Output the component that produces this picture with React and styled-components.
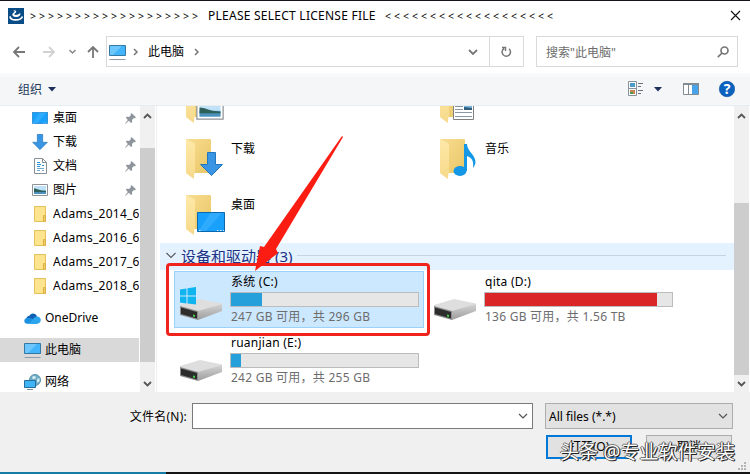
import React from "react";
import styled, { createGlobalStyle } from "styled-components";

const GlobalStyle = createGlobalStyle`
    * {
        box-sizing: border-box;
    }

    body {
        margin: 0;
        overflow: hidden;
        font-family: "Noto Sans", "Noto Sans CJK SC", sans-serif;
        font-size: 12px;
        color: #000;
    }

    svg {
        display: block;
        flex: none;
    }
`;

const Screen = styled.div`
    position: relative;
    display: flex;
    flex-direction: column;
    width: 750px;
    height: 474px;
    overflow: hidden;
    background: #fff;
    border-top: 1px solid #17131a;
`;

const TitleBar = styled.header`
    display: flex;
    align-items: center;
    gap: 6px;
    height: 29px;
    padding: 0 9px 0 8px;
`;

const Title = styled.h1`
    display: flex;
    flex: 1;
    align-items: center;
    margin: 0;
    font-size: 12px;
    font-weight: 400;
    white-space: pre;
`;

const Chevrons = styled.span`
    width: 171px;
    font-size: 10.5px;
    letter-spacing: 2.99px;
`;

const Caption = styled.span`
    width: 184px;
    padding-left: 7px;
    letter-spacing: 0.25px;
`;

const NavBar = styled.nav`
    display: flex;
    align-items: center;
    height: 43px;
    padding-left: 12px;
`;

const NavIcons = styled.div`
    display: flex;
    align-items: center;
    width: 94px;
`;

const PathBox = styled.div`
    display: flex;
    align-items: center;
    width: 418px;
    height: 31px;
    margin-right: 12px;
    padding-left: 2px;
    border: 1px solid #d9d9d9;
`;

const SearchBox = styled.div`
    display: flex;
    align-items: center;
    width: 202px;
    height: 31px;
    padding-right: 8px;
    border: 1px solid #d9d9d9;
`;

const Crumb = styled.span`
    display: flex;
    flex: 1;
    align-items: center;
    padding-left: 7px;
`;

const PathText = styled.span`
    width: 36px;
    margin: 0 10px 2px 9px;
    white-space: nowrap;
`;

const Refresh = styled.div`
    display: flex;
    align-items: center;
    justify-content: center;
    width: 34px;
    height: 29px;
    margin-left: 11px;
    border-left: 1px solid #d9d9d9;
`;

const SearchText = styled.span`
    flex: 1;
    padding-left: 9px;
    color: #6d6d6d;
    white-space: nowrap;
`;

const ToolBar = styled.div`
    display: flex;
    align-items: center;
    height: 33px;
    padding: 0 15px 0 18px;
    color: #1e395b;
    background: linear-gradient(#f9fbfc, #f4f6f8 5px);
    border-bottom: 1px solid #e8ecee;
`;

const Organize = styled.span`
    flex: 1;
    display: flex;
    align-items: center;
    gap: 6px;
`;

const Body = styled.div`
    display: flex;
    height: 286px;
`;

const Sidebar = styled.aside`
    width: 139px;
    margin-right: 1px;
    overflow: hidden;
`;

const SideRow = styled.div`
    display: flex;
    align-items: center;
    height: 24px;
    margin-top: ${(p) => (p.$root ? 8 : 0)}px;
    padding-left: ${(p) => (p.$root ? 24 : 32)}px;
    background: ${(p) => (p.$active ? "#d9d9d9" : "none")};
    white-space: nowrap;
`;

const SideIcon = styled.span`
    display: flex;
    flex: none;
    justify-content: center;
    width: 16px;
    margin-right: 5px;
`;

const SideLabel = styled.span`
    flex: 1;
    padding-bottom: 2px;
    letter-spacing: ${(p) => (p.$latin ? 0.25 : 0)}px;
`;

const Pin = styled.span`
    margin-right: 3px;
`;

const ScrollTrack = styled.div`
    display: flex;
    flex-direction: column;
    align-items: center;
    justify-content: space-between;
    width: 15px;
    padding: 7px 0 5px;
    background: linear-gradient(
        #f0f0f0 ${(p) => p.$from}px,
        #cdcdcd ${(p) => p.$from}px,
        #cdcdcd ${(p) => p.$to}px,
        #f0f0f0 ${(p) => p.$to}px
    );
`;

const Main = styled.main`
    width: 578px;
    margin-left: 1px;
    padding-left: 3px;
    border-left: 1px solid #eef1f3;
    overflow: hidden;
`;

const Folders = styled.div`
    display: grid;
    grid-template-columns: 254px 254px;
    grid-auto-rows: 56px;
    height: 164px;
    margin-top: -28px;
    padding-left: 26px;
`;

const FolderTile = styled.div`
    display: flex;
    padding-top: 5px;
`;

const FolderName = styled.span`
    margin: 1px 0 0 4px;
    line-height: 18px;
`;

const GroupHeader = styled.div`
    display: flex;
    align-items: center;
    gap: 5px;
    height: 27px;
    margin-top: 1px;
    padding: 0 8px 3px 6px;
    color: #1e3287;
    background: #e3f2fe;
    font-size: 15px;
    white-space: nowrap;

    &::after {
        content: "";
        flex: 1;
        height: 1px;
        background: #c4d4e0;
    }
`;

const Drives = styled.div`
    display: grid;
    grid-template-columns: 250px 250px;
    grid-auto-rows: 57px;
    gap: 4px;
    padding: 1px 0 0 14px;
`;

const DriveTile = styled.div`
    display: flex;
    padding-left: 5px;
    background: ${(p) => (p.$selected ? "#cce8ff" : "none")};
    border: 1px solid ${(p) => (p.$selected ? "#99d1ff" : "transparent")};
`;

const DriveInfo = styled.div`
    width: 189px;
    margin-left: 6px;
    letter-spacing: 0.25px;
    white-space: nowrap;
`;

const DriveName = styled.div`
    height: 20px;
    padding-left: 1px;
    line-height: 19px;
`;

const Gauge = styled.div`
    height: 15px;
    background: #e6e6e6;
    border: 1px solid #bcbcbc;
`;

const GaugeFill = styled.div`
    height: 13px;
    background: ${(p) => (p.$full ? "#da2626" : "#26a0da")};
`;

const DriveSpace = styled.div`
    padding: 1px 0 0 1px;
    color: #6d6d6d;
    line-height: 18px;
`;

const Footer = styled.footer`
    display: flex;
    flex-direction: column;
    gap: 6px;
    height: 80px;
    padding: 11px 17px 0 0;
    background: #f0f0f0;
`;

const FooterRow = styled.div`
    display: flex;
    align-items: center;
    justify-content: flex-end;
    gap: ${(p) => p.$gap}px;
`;

const FileLabel = styled.label`
    margin-right: -7px;
    letter-spacing: 0.25px;
    white-space: nowrap;
`;

const Combo = styled.div`
    display: flex;
    align-items: center;
    justify-content: space-between;
    width: ${(p) => p.$width}px;
    height: 26px;
    padding: 0 4px 0 3px;
    background: ${(p) => (p.$editable ? "#fff" : "#e2e2e2")};
    border: 1px solid ${(p) => (p.$editable ? "#7a7a7a" : "#adadad")};
`;

const Button = styled.button`
    width: 86px;
    height: 24px;
    padding: 0;
    margin-right: ${(p) => (p.$primary ? 0 : 1)}px;
    background: #e1e1e1;
    border: ${(p) => (p.$primary ? "2px solid #0078d7" : "1px solid #adadad")};
    font: inherit;
    line-height: 18px;
`;

const Desktop = styled.div`
    height: 2px;
    background: linear-gradient(90deg, #157ca6 166px, #141414 166px);
`;

const Highlight = styled.div`
    position: absolute;
    left: 166px;
    top: 262px;
    width: 264px;
    height: 73px;
    border: 3px solid #f0241c;
    border-radius: 4px;
`;

const Arrow = styled.svg`
    position: absolute;
    left: 250px;
    top: 133px;
`;

const Watermark = styled.div`
    position: absolute;
    left: 560px;
    top: 438px;
    color: #fff;
    font-size: 19px;
    line-height: 26px;
    letter-spacing: 0.1px;
    white-space: nowrap;
    text-shadow: 1px 1px 0 #222, -1px 0 0 #555, 0 -1px 0 #777, 1px 0 0 #333;
`;

const Grip = styled.svg`
    position: absolute;
    left: 738px;
    top: 461px;
`;

const Chevron = ({ d = "M1 1l4 4 4-4", w = 10, h = 6, color = "#555", stroke = 1.8 }) => (
    <svg width={w} height={h} fill="none" stroke={color} strokeWidth={stroke}>
        <path d={d} />
    </svg>
);

const CrumbArrow = () => <Chevron d="M1 1l3 3-3 3" w={6} h={8} color="#777" stroke={1.5} />;

const AppLogo = () => (
    <svg width="16" height="16" viewBox="0 0 16 16">
        <path fill="#0a4c86" d="M0 0h16v16H0z" />
        <path fill="#fff" d="M5 2.5c2-1 4 .2 3 1.8-.7 1-2 1.4-1.6 2.2.6 1 4.6.2 5.6-1.5 1.3 2-1 4-4 4C5 9 3.8 7.5 4.5 6 5 4.8 6.6 4.3 6.6 3.5 6.6 2.8 5.8 2.6 5 2.5z" />
        <path fill="none" stroke="#fff" strokeWidth="1.7" d="M2 8.3c.5 4.8 10.5 4.8 12.5.2" />
    </svg>
);

const Monitor = () => (
    <svg width="17" height="16" viewBox="0 0 17 16">
        <path fill="#41b4fb" stroke="#3479a4" d="M.5 1.5h16v10H.5z" />
        <path fill="#8bd2fd" opacity=".6" d="M1 2h12L4 11H1z" />
        <path stroke="#8e9caa" d="M.5 15.5h16" />
    </svg>
);

const DesktopIcon = ({ w = 16, h = 12 }) => (
    <svg width={w} height={h} viewBox="0 0 28 20" preserveAspectRatio="none">
        <path fill="#18a0fb" stroke="#0b68ae" d="M.5.5h27v19H.5z" />
        <path fill="#46b6ff" opacity=".5" d="M13 1h12L9 19H2z" />
        <path stroke="#d6efff" strokeDasharray="1.5 1.5" d="M2 18.5h2M20 18.5h7" />
    </svg>
);

const DownArrow = ({ w = 16, h = 16 }) => (
    <svg width={w} height={h} viewBox="0 0 24 24">
        <path fill="#3a96e4" stroke="#2477bd" d="M8 .5h8v12h7L12 23.5 1 12.5h7z" />
    </svg>
);

const DocIcon = () => (
    <svg width="13" height="16" fill="none">
        <path fill="#fff" stroke="#868e94" d="M.5.5h8l4 4v11H.5z" />
        <path stroke="#868e94" d="M8.5.5v4h4" />
        <path stroke="#2a8fd4" d="M3 4.5h3M3 6.5h4M8 7.5h2M3 8.5h3" />
        <path stroke="#6fa9cf" d="M3 10.5h7M3 12.5h3M8 12.5h2" />
    </svg>
);

const PictureIcon = ({ w = 16, h = 12 }) => (
    <svg width={w} height={h} viewBox="0 0 16 12" preserveAspectRatio="none">
        <path fill="#fff" stroke="#8d9398" strokeWidth={w > 16 ? 0.7 : 1} d="M.5.5h15v11H.5z" />
        <path fill="#bfe2f8" d="M2 2h12v8H2z" />
        <path fill="#4b91bc" d="M2 6.5h12V10H2z" />
        <path fill="#2d6058" d="M2 4.5c3 0 5 2 12 2.5v1H2z" />
    </svg>
);

const SmallFolder = () => (
    <svg width="14" height="17">
        <path fill="#ffe48f" stroke="#e5c158" d="M1.5.5h11v15h-11z" />
        <path fill="#f3cd63" stroke="#dbb044" d="M10.5 9.5h2v6h-2z" />
    </svg>
);

const Cloud = () => (
    <svg width="17" height="11" viewBox="0 0 17 11">
        <path fill="#0f5fb4" d="M2 6C2.5 3.5 4.5 3 5.2 3 6.5 0 11.5-.6 13 3.5L9 8z" />
        <path fill="#1b8fe0" d="M3.5 10.8C-1 10.5-.5 5 3.5 5c2-.5 4 .5 6 2l4 3.8z" />
        <path fill="#2ba6ee" d="M8 7.5c2-3.5 4-4 5.5-4 4.5.5 4.3 7-.2 7.3H4z" />
    </svg>
);

const Network = () => (
    <svg width="17" height="16" viewBox="0 0 17 16">
        <circle cx="11" cy="6" r="5.5" fill="#6eabc4" stroke="#5792ad" />
        <path fill="#d3ecf2" d="M8 3c2-2 4-1 4 .5s-2 1-3 2zM13 5l2.5-1v3.5l-2.5 1z" />
        <path fill="#40b5f5" stroke="#276d9b" d="M.5 6.5h11v7H.5z" />
        <path stroke="#7a8b99" d="M3 15.5h6" />
    </svg>
);

const PinIcon = () => (
    <svg width="11" height="11" viewBox="0 0 11 11">
        <path fill="#8e959c" d="M6.5 0L11 4.3 9.8 5.2 9 4.9 7 7l.1 2.3-1 .8-2.4-2.3L.5 10.7l-.4-.4 2.8-3.3L.8 4.8l.8-1L4 4 6 2 5.7.9z" />
    </svg>
);

const BigFolder = ({ children }) => (
    <svg width="41" height="48" viewBox="0 0 41 48">
        <defs>
            <linearGradient id="folderBack" x2="1" y2="1">
                <stop stopColor="#f8dc92" />
                <stop offset="1" stopColor="#e9c766" />
            </linearGradient>
            <linearGradient id="folderFront" y2="1" x2="0">
                <stop stopColor="#ffe9a9" />
                <stop offset="1" stopColor="#f6d98a" />
            </linearGradient>
        </defs>
        <path fill="url(#folderBack)" d="M0 0h24q1 0 1 1v33H7z" />
        <path fill="url(#folderFront)" d="M0 0l8 4q1 1 1 2v27q-1 1-1 7L1 35q-1-1-1-2z" />
        {children}
    </svg>
);

const folderArt = {
    picture: <g transform="translate(10 17)"><PictureIcon w={28} h={20} /></g>,
    document: (
        <g transform="translate(13 12)">
            <path fill="#fff" stroke="#818181" d="M.5.5h20v24H.5z" />
            <path stroke="#8b99a4" d="M2 11.5h8M2 14.5h8M2 17.5h17M2 21.5h17" />
            <path fill="#79b5dc" d="M11 8h8v7h-8z" />
            <path fill="#315c7a" d="M11 12l8 1v2h-8z" />
        </g>
    ),
    download: <g transform="translate(13.5 13)"><DownArrow w={24} h={24} /></g>,
    desktop: <g transform="translate(11 17)"><DesktopIcon w={28} h={20} /></g>,
    music: (
        <g fill="#1497e5">
            <ellipse cx="20" cy="32" rx="6.5" ry="5" />
            <path d="M24 5h3c0 7 8.5 11 8.5 18 0 2-1 4-2.5 6 1-8-1.5-10-6-12v15h-3z" />
        </g>
    ),
};

const DriveIcon = ({ system }) => (
    <svg width="44" height="50" viewBox="0 0 44 50">
        <defs>
            <linearGradient id="driveSide" x2="0" y2="1">
                <stop stopColor="#d4d4d4" />
                <stop offset="1" stopColor="#9d9d9d" />
            </linearGradient>
        </defs>
        <path fill="#dedede" d="M0 33l20-6 22 4.5v2L18 41 0 36z" />
        <path fill="url(#driveSide)" d="M18 39l24-7v7L18 48z" />
        <path fill="#8c8c8c" d="M0 34l18 5v9L0 43z" />
        <path fill="#2c2c2c" d="M1 35.5L17 40v6.5L1 42z" />
        <path fill="#45d04b" d="M13 42.5l2 .5v2l-2-.5z" />
        {system && (
            <path fill="#10b4ef" d="M0 17.5l6.5-1v7H0zM7.5 16.3L16 15v8.5H7.5zM0 24.5h6.5v7L0 30.5zM7.5 24.5H16v8l-8.5-1z" />
        )}
    </svg>
);

const pinned = [
    { name: "桌面", icon: <DesktopIcon /> },
    { name: "下载", icon: <DownArrow /> },
    { name: "文档", icon: <DocIcon /> },
    { name: "图片", icon: <PictureIcon /> },
];

const recent = ["Adams_2014_64", "Adams_2016_64", "Adams_2017_64", "Adams_2018_64"];

const roots = [
    { name: "OneDrive", icon: <Cloud /> },
    { name: "此电脑", icon: <Monitor />, active: true },
    { name: "网络", icon: <Network /> },
];

const folders = [
    { name: "", art: "picture" },
    { name: "", art: "document" },
    { name: "下载", art: "download" },
    { name: "音乐", art: "music" },
    { name: "桌面", art: "desktop" },
];

const drives = [
    { name: "系统 (C:)", space: "247 GB 可用，共 296 GB", used: 16.5, system: true },
    { name: "qita (D:)", space: "136 GB 可用，共 1.56 TB", used: 92, full: true },
    { name: "ruanjian (E:)", space: "242 GB 可用，共 255 GB", used: 5.2 },
];

const ScrollBar = ({ from, to }) => (
    <ScrollTrack $from={from} $to={to}>
        <Chevron d="M1 5l3.5-3.5L8 5" w={9} h={6} />
        <Chevron d="M1 1l3.5 3.5L8 1" w={9} h={6} />
    </ScrollTrack>
);

const App = () => {
    return (
        <Screen>
            <GlobalStyle />
            <TitleBar>
                <AppLogo />
                <Title>
                    <Chevrons>{">".repeat(19)}</Chevrons>
                    <Caption>PLEASE SELECT LICENSE FILE</Caption>
                    <Chevrons>{"<".repeat(19)}</Chevrons>
                </Title>
                <Chevron d="M1 1l9 9M10 1l-9 9" w={11} h={11} color="#111" stroke={1.1} />
            </TitleBar>

            <NavBar>
                <NavIcons>
                    <svg width="94" height="16" fill="none" strokeWidth="1.8">
                        <path stroke="#777" d="M13 8H2M7 3L2 8l5 5" />
                        <path stroke="#d2d2d2" d="M31 8h11M37 3l5 5-5 5" />
                        <path stroke="#888" strokeWidth="1.5" d="M57.5 6l3 3 3-3" />
                        <path stroke="#777" d="M81 14V3M76 8l5-5 5 5" />
                    </svg>
                </NavIcons>
                <PathBox>
                    <Monitor />
                    <Crumb>
                        <CrumbArrow />
                        <PathText>此电脑</PathText>
                        <CrumbArrow />
                    </Crumb>
                    <Chevron color="#777" />
                    <Refresh>
                        <svg width="11" height="12" fill="none" stroke="#777" strokeWidth="1.5">
                            <path d="M3 2.5a4.2 4.2 0 1 0 5 .3M1 1.5h3.5V5" />
                        </svg>
                    </Refresh>
                </PathBox>
                <SearchBox>
                    <SearchText>搜索"此电脑"</SearchText>
                    <svg width="12" height="12" fill="none" stroke="#777" strokeWidth="1.7">
                        <circle cx="7.5" cy="4.5" r="3.5" />
                        <path d="M5 7L.8 11.2" />
                    </svg>
                </SearchBox>
            </NavBar>

            <ToolBar>
                <Organize>
                    组织
                    <svg width="8" height="5"><path fill="#1e2f5c" d="M0 0h8L4 4.5z" /></svg>
                </Organize>
                <svg width="107" height="18" fill="none">
                    <path fill="#fff" stroke="#8b9299" d="M.5 1.5h8v14h-8zM.5 8.5h8" />
                    <path fill="#4a9cc9" d="M2 3h5v4H2z" />
                    <path fill="#c98450" d="M2 10h5v4H2z" />
                    <path fill="#4a9c59" d="M2 12h3v2H2z" />
                    <path stroke="#6b7279" d="M10 3.5h5M10 6.5h3M10 10.5h5M10 13.5h3" />
                    <path fill="#1e2f5c" d="M26 7h8l-4 4.5z" />
                    <path fill="#fff" stroke="#838b92" d="M55.5 3.5h15v11h-15z" />
                    <path fill="#838b92" d="M55 3h16v2H55zM60 5h1v9h-1z" />
                    <path fill="#49a3ea" d="M64 5h6v9h-6z" />
                    <circle cx="99" cy="9" r="7.7" fill="#0b63bf" stroke="#0b4f9c" strokeWidth=".6" />
                    <text x="99" y="14" fill="#fff" fontSize="14" fontWeight="700" textAnchor="middle">?</text>
                </svg>
            </ToolBar>

            <Body>
                <Sidebar>
                    {pinned.map((item) => (
                        <SideRow key={item.name}>
                            <SideIcon>{item.icon}</SideIcon>
                            <SideLabel>{item.name}</SideLabel>
                            <Pin><PinIcon /></Pin>
                        </SideRow>
                    ))}
                    {recent.map((name) => (
                        <SideRow key={name}>
                            <SideIcon><SmallFolder /></SideIcon>
                            <SideLabel $latin>{name}</SideLabel>
                        </SideRow>
                    ))}
                    {roots.map((item) => (
                        <SideRow key={item.name} $root $active={item.active}>
                            <SideIcon>{item.icon}</SideIcon>
                            <SideLabel>{item.name}</SideLabel>
                        </SideRow>
                    ))}
                </Sidebar>
                <ScrollBar from={42} to={256} />

                <Main>
                    <Folders>
                        {folders.map((folder) => (
                            <FolderTile key={folder.art}>
                                <BigFolder>{folderArt[folder.art]}</BigFolder>
                                <FolderName>{folder.name}</FolderName>
                            </FolderTile>
                        ))}
                    </Folders>
                    <GroupHeader>
                        <Chevron d="M.5 1L5 5.5 9.5 1" h={7} stroke={1.1} />
                        设备和驱动器 (3)
                    </GroupHeader>
                    <Drives>
                        {drives.map((drive) => (
                            <DriveTile key={drive.name} $selected={drive.system}>
                                <DriveIcon system={drive.system} />
                                <DriveInfo>
                                    <DriveName>{drive.name}</DriveName>
                                    <Gauge>
                                        <GaugeFill $full={drive.full} style={{ width: `${drive.used}%` }} />
                                    </Gauge>
                                    <DriveSpace>{drive.space}</DriveSpace>
                                </DriveInfo>
                            </DriveTile>
                        ))}
                    </Drives>
                </Main>
                <ScrollBar from={97} to={269} />
            </Body>

            <Footer>
                <FooterRow $gap={12}>
                    <FileLabel>文件名(N):</FileLabel>
                    <Combo $width={341} $editable>
                        <span />
                        <Chevron stroke={1.2} />
                    </Combo>
                    <Combo $width={188}>
                        All files (*.*)
                        <Chevron stroke={1.2} />
                    </Combo>
                </FooterRow>
                <FooterRow $gap={14}>
                    <Button $primary>打开(O)</Button>
                    <Button>取消</Button>
                </FooterRow>
            </Footer>
            <Desktop />

            <Highlight />
            <Arrow width="96" height="140">
                <path fill="#fb1d12" d="M92 2l1 1L26 115l2 4L5 137l5-25 4 1z" />
            </Arrow>
            <Grip width="9" height="9" fill="#b5b5b5">
                <path d="M6 0h2v2H6zM3 3h2v2H3zM6 3h2v2H6zM0 6h2v2H0zM3 6h2v2H3zM6 6h2v2H6z" />
            </Grip>
            <Watermark>头条 @专业软件安装</Watermark>
        </Screen>
    );
};

export default App;
